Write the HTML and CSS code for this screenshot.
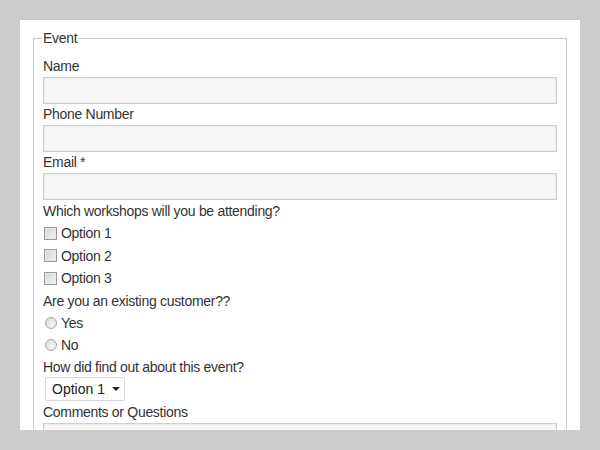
FILE: index.html
```html
<!DOCTYPE html>
<html>
<head>
<meta charset="utf-8">
<link rel="stylesheet" href="styles.css">
</head>
<body>
<div class="panel">
  <form class="form">
    <fieldset class="group">
      <legend class="legend">Event</legend>
      <label class="label">Name</label>
      <input class="field" type="text">
      <label class="label">Phone Number</label>
      <input class="field" type="text">
      <label class="label">Email *</label>
      <input class="field" type="text">
      <div class="label label-gap">Which workshops will you be attending?</div>
      <label class="choice"><input class="check" type="checkbox"><span>Option 1</span></label>
      <label class="choice"><input class="check" type="checkbox"><span>Option 2</span></label>
      <label class="choice"><input class="check" type="checkbox"><span>Option 3</span></label>
      <div class="label label-gap">Are you an existing customer??</div>
      <label class="choice"><input class="radio" type="radio" name="cust"><span>Yes</span></label>
      <label class="choice"><input class="radio" type="radio" name="cust"><span>No</span></label>
      <div class="label">How did find out about this event?</div>
      <div class="select-row">
        <span class="select-wrap">
          <select class="select"><option>Option 1</option><option>Option 2</option><option>Option 3</option></select>
        </span>
      </div>
      <label class="label">Comments or Questions</label>
      <textarea class="area"></textarea>
    </fieldset>
  </form>
</div>
</body>
</html>
```
FILE: styles.css
```css
html, body {
  margin: 0;
  padding: 0;
}
body {
  background: #cccccc;
  padding: 20px;
  font-family: "Liberation Sans", Arial, sans-serif;
  font-size: 14px;
  letter-spacing: -0.3px;
  color: #333333;
}
.panel {
  background: #ffffff;
  height: 410px;
  overflow: hidden;
  padding: 10px 13px 0 13px;
  box-sizing: border-box;
}
.form {
  margin: 0;
}
.group {
  margin: 0;
  border: 1px solid #c8c8c8;
  padding: 10px 9px 10px 9px;
  min-width: 0;
}
.legend {
  padding: 0 1px;
  margin-left: -1px;
  line-height: 16px;
}
.label {
  display: block;
  line-height: 21px;
}
.label-gap {
  margin-top: 1px;
}
.field {
  display: block;
  box-sizing: border-box;
  width: 100%;
  height: 27px;
  margin: 0;
  border: 1px solid #cfcfcf;
  background: #f7f7f7;
  box-shadow: inset 0 0 0 1px #ececec;
  font: inherit;
}
.choice {
  display: flex;
  align-items: center;
  height: 22.5px;
}
.check {
  -webkit-appearance: none;
  appearance: none;
  width: 13px;
  height: 13px;
  margin: 0 4px 0 1px;
  box-sizing: border-box;
  border: 1px solid #9a9a9a;
  background: linear-gradient(135deg, #d4d4d4, #f4f4f4);
  box-shadow: inset 0 0 0 1px #e8e8e8;
}
.radio {
  -webkit-appearance: none;
  appearance: none;
  width: 12px;
  height: 12px;
  margin: 0 4px 0 2px;
  box-sizing: border-box;
  border: 1px solid #a8a8a8;
  border-radius: 50%;
  background: radial-gradient(circle at 60% 65%, #f6f6f6, #d4d4d4);
}
.select-row {
  display: flex;
  margin-top: -1px;
  padding: 0 0 0 2px;
  height: 25px;
}
.select-wrap {
  position: relative;
  display: inline-block;
}
.select-wrap::after {
  content: "";
  position: absolute;
  right: 5px;
  top: 10px;
  border-left: 4px solid transparent;
  border-right: 4px solid transparent;
  border-top: 4px solid #222;
  pointer-events: none;
}
.select {
  -webkit-appearance: none;
  appearance: none;
  width: 80px;
  height: 24px;
  box-sizing: border-box;
  border: 1px solid #d8d8d8;
  border-radius: 2px;
  background: #ffffff;
  font: inherit;
  color: #222;
  padding: 0 0 0 6px;
  margin: 0;
}
.area {
  display: block;
  box-sizing: border-box;
  width: 100%;
  height: 80px;
  margin: 0;
  border: 1px solid #cfcfcf;
  background: #f7f7f7;
  box-shadow: inset 0 0 0 1px #ececec;
  resize: none;
}
```
